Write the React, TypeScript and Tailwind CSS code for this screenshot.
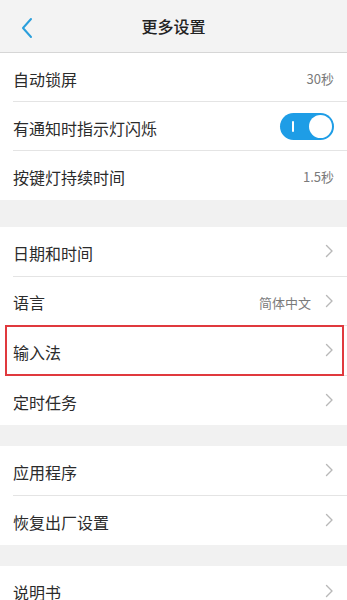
import React from "react";

const Chevron = () => (
  <svg width="9" height="14" viewBox="0 0 9 14" fill="none" className="ml-[14px]">
    <path d="M1.5 1.5L7 7L1.5 12.5" stroke="#b8b8b8" strokeWidth="1.4" strokeLinecap="round" strokeLinejoin="round" />
  </svg>
);

const Toggle = () => (
  <div className="relative w-[54px] h-[27px] rounded-full bg-[#1e9de6]">
    <div className="absolute left-[12px] top-[8px] w-[2px] h-[11px] bg-white rounded-sm" />
    <div className="absolute right-[2px] top-[2px] w-[23px] h-[23px] rounded-full bg-white" />
  </div>
);

type RowProps = {
  label: string;
  value?: string;
  chevron?: boolean;
  toggle?: boolean;
  last?: boolean;
  h: string;
};

const Row = ({ label, value, chevron, toggle, last, h }: RowProps) => (
  <div className="pl-[13px] bg-white">
    <div
      className={`${h} flex items-center pr-[13px] ${last ? "" : "border-b border-[#e4e4e4]"}`}
    >
      <span className="flex-1 text-[16px] text-[#2b2b2b] pt-[3px]">{label}</span>
      {value && <span className="text-[13px] text-[#7a7a7a] pt-[3px]">{value}</span>}
      {toggle && <Toggle />}
      {chevron && <Chevron />}
    </div>
  </div>
);

export default function App() {
  return (
    <div
      className="w-[347px] h-[600px] overflow-hidden bg-[#f1f1f1]"
      style={{ fontFamily: '"Noto Sans CJK SC", "Noto Sans", sans-serif' }}
    >
      <div className="h-[53px] bg-[#f3f3f3] border-b border-[#d6d6d6] relative flex items-center justify-center">
        <svg width="14" height="22" viewBox="0 0 14 22" fill="none" className="absolute left-[20px] top-[17px]">
          <path d="M11 2L3 11L11 20" stroke="#2a9fdc" strokeWidth="2" strokeLinecap="round" strokeLinejoin="round" />
        </svg>
        <span className="text-[16px] font-medium text-[#222]">更多设置</span>
      </div>

      <Row h="h-[49px]" label="自动锁屏" value="30秒" />
      <Row h="h-[49px]" label="有通知时指示灯闪烁" toggle />
      <Row h="h-[49px]" label="按键灯持续时间" value="1.5秒" last />

      <div className="h-[27px]" />

      <Row h="h-[49.5px]" label="日期和时间" chevron />
      <Row h="h-[49.5px]" label="语言" value="简体中文" chevron />
      <div className="relative">
        <Row h="h-[49.5px]" label="输入法" chevron />
        <div className="absolute left-[5px] right-[3px] top-[-1px] bottom-[0px] border-2 border-[#e0393e] pointer-events-none" />
      </div>
      <Row h="h-[49.5px]" label="定时任务" chevron last />

      <div className="h-[21px]" />

      <Row h="h-[49.5px]" label="应用程序" chevron />
      <Row h="h-[49.5px]" label="恢复出厂设置" chevron last />

      <div className="h-[21px]" />

      <Row h="h-[49.5px]" label="说明书" chevron last />
    </div>
  );
}
